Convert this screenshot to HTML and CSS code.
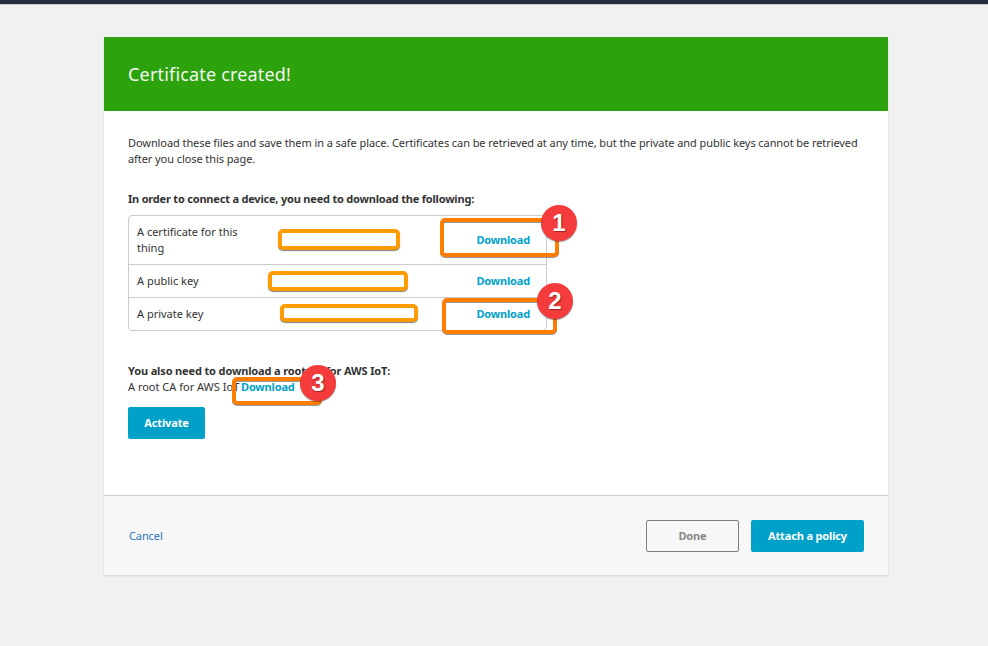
FILE: index.html
```html
<!DOCTYPE html>
<html lang="en">
<head>
<meta charset="utf-8">
<title>Certificate created!</title>
<link rel="stylesheet" href="styles.css">
</head>
<body>
<div class="topbar"></div>
<main class="card">
  <header class="banner"><h1>Certificate created!</h1></header>
  <section class="content">
    <p class="intro">Download these files and save them in a safe place. Certificates can be retrieved at any time, but the private and public keys cannot be retrieved<br>after you close this page.</p>
    <h2 class="h-connect">In order to connect a device, you need to download the following:</h2>
    <div class="files">
      <div class="file"><span class="name">A certificate for this<br>thing</span><a class="dl">Download</a></div>
      <div class="file"><span class="name">A public key</span><a class="dl">Download</a></div>
      <div class="file"><span class="name">A private key</span><a class="dl">Download</a></div>
    </div>
    <h2 class="h-root">You also need to download a root CA for AWS IoT:</h2>
    <div class="root"><span class="root-name">A root CA for AWS IoT</span><a class="dl">Download</a></div>
    <button class="btn primary activate">Activate</button>
  </section>
  <footer class="footer">
    <a class="cancel">Cancel</a>
    <div class="actions">
      <button class="btn outline">Done</button>
      <button class="btn primary attach">Attach a policy</button>
    </div>
  </footer>
</main>
<div class="mask mask-a"></div>
<div class="mask mask-b"></div>
<div class="mask mask-c"></div>
<div class="mark mark-1"></div>
<div class="mark mark-2"></div>
<div class="mark mark-3"></div>
<div class="badge badge-1">1</div>
<div class="badge badge-2">2</div>
<div class="badge badge-3">3</div>
</body>
</html>
```
FILE: styles.css
```css
* { box-sizing: border-box; }
body {
  margin: 0;
  height: 646px;
  position: relative;
  overflow: hidden;
  background: #f1f1f1;
  color: #333;
  font: 11px/16px "Noto Sans", sans-serif;
}
h1, h2, p { margin: 0; }
span, a, h1, h2 { white-space: nowrap; }
.topbar { height: 5px; background: #232f3e; border-bottom: 1px solid #ccc; }
.card {
  width: 784px;
  margin: 32px 0 0 104px;
  background: #fff;
  box-shadow: 0 1px 2px rgba(0, 0, 0, .13);
}
.banner {
  height: 74px;
  padding: 0 24px;
  display: flex;
  align-items: center;
  background: #2ca20c;
}
h1 { font-size: 18px; line-height: 24px; font-weight: 400; letter-spacing: .18px; color: #f4f6f2; }
.content { height: 384px; padding: 24px; }
.intro { letter-spacing: -.077px; white-space: nowrap; }
h2 { font-size: 11px; line-height: 16px; font-weight: 700; }
.h-connect { margin-top: 24px; letter-spacing: -.2px; }
.files {
  width: 419px;
  margin-top: 8px;
  border: 1px solid #ccc;
  border-radius: 4px;
}
.file {
  display: flex;
  justify-content: space-between;
  align-items: center;
  padding: 8px 16px 8px 8px;
}
.file + .file { border-top: 1px solid #ccc; }
.dl { color: #00a1c9; font-weight: 700; letter-spacing: -.17px; }
.h-root { margin-top: 32px; letter-spacing: -.14px; }
.root { display: flex; }
.root-name { width: 113px; }
.btn {
  height: 32px;
  padding: 0;
  border: 0;
  border-radius: 2px;
  font: 700 11px/16px "Noto Sans", sans-serif;
  letter-spacing: -.15px;
}
.primary { background: #00a1c9; color: #fff; }
.activate { display: block; width: 77px; margin-top: 12px; }
.outline { width: 93px; border: 1px solid #7f7f7f; background: transparent; color: #888; }
.attach { width: 113px; }
.footer {
  height: 80px;
  border-top: 1px solid #ccc;
  padding: 0 24px 0 25px;
  display: flex;
  justify-content: space-between;
  align-items: center;
  background: #f7f7f7;
}
.cancel { color: #2a73bb; letter-spacing: -.1px; }
.actions { display: flex; gap: 12px; }
.mask, .mark, .badge { position: absolute; }
.mask {
  border: 4px solid #ff9d00;
  border-radius: 5px;
  background: #fff;
  box-shadow: 0 1px 1px rgba(0, 0, 0, .5);
}
.mask-a { left: 278px; top: 229px; width: 122px; height: 21px; }
.mask-b { left: 268px; top: 271px; width: 140px; height: 20px; }
.mask-c { left: 280px; top: 304px; width: 138px; height: 18px; }
.mark {
  border: 4px solid #ff7d00;
  border-radius: 5px;
  filter: drop-shadow(0 1px .5px rgba(0, 0, 0, .4));
}
.mark-1 { left: 440px; top: 218px; width: 119px; height: 39px; }
.mark-2 { left: 442px; top: 298px; width: 115px; height: 36px; }
.mark-3 { left: 232px; top: 377px; width: 90px; height: 28px; }
.badge {
  width: 36px;
  height: 36px;
  border-radius: 50%;
  background: #f43c3c;
  color: #fff;
  text-align: center;
  font: 700 24px/35px "Liberation Sans", sans-serif;
  text-shadow: 1px 1px 1px rgba(0, 0, 0, .4);
  box-shadow: 0 1px 1px rgba(0, 0, 0, .4);
}
.badge-1 { left: 541px; top: 205px; }
.badge-2 { left: 537px; top: 283px; }
.badge-3 { left: 300px; top: 365px; }
```
